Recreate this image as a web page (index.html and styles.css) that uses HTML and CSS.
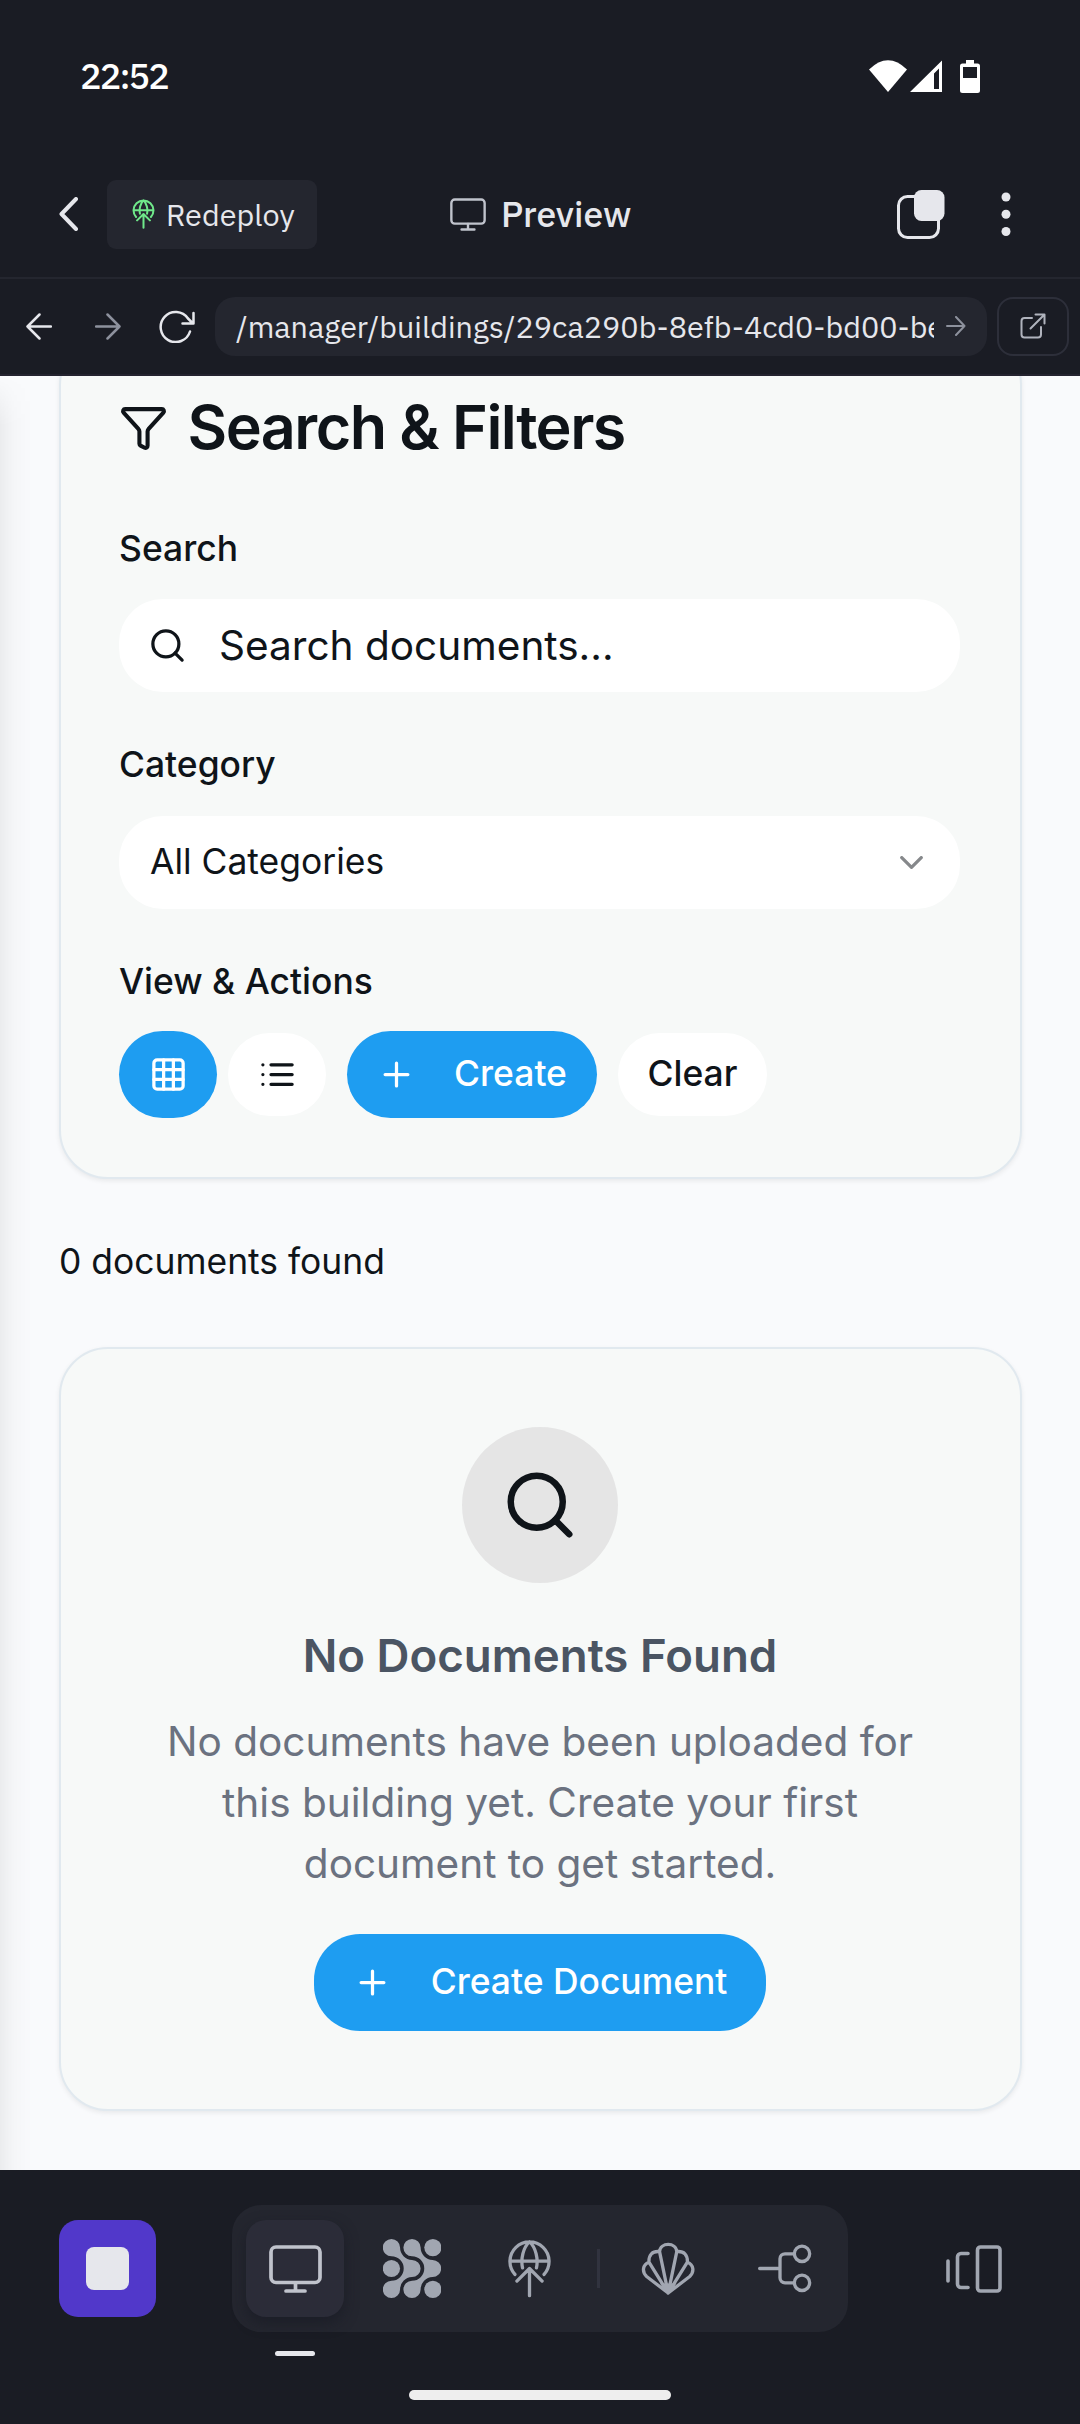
FILE: index.html
```html
<!DOCTYPE html>
<html lang="en">
<head>
<meta charset="utf-8">
<title>Preview</title>
<link rel="stylesheet" href="styles.css">
</head>
<body>
<svg class="defs" width="0" height="0" aria-hidden="true">
  <symbol id="globe" viewBox="405 26 134 178"><path d="M428 133A59 59 0 1 1 516 133M413 93H531M451 113C445 86 453 52 472 34C491 52 499 86 493 113M472 116V197M434 153L472 115L510 153"/></symbol>
  <symbol id="monitor" viewBox="0 0 53 48"><rect x="2" y="2" width="49" height="35.5" rx="5"/><path d="M26.500 38V46M17 46H36"/></symbol>
  <symbol id="search" viewBox="0 0 24 24"><circle cx="11" cy="11" r="8"/><path d="m21 21-4.340-4.340"/></symbol>
  <symbol id="plus" viewBox="0 0 24 24"><path d="M5 12h14M12 5v14"/></symbol>
</svg>

<header class="status">
  <span class="time">22:52</span>
  <svg class="status-icons" width="112" height="34" viewBox="0 0 112 34">
    <path d="M0 9.500Q19 -9 38 9.500L19 32Z"/>
    <path fill-rule="evenodd" d="M41 32L73 .500V32ZM65 13.500V29H70V8.500Z"/>
    <path fill-rule="evenodd" d="M97 0h8v3.500h3.500a2.500 2.500 0 0 1 2.500 2.500v24.500a2.500 2.500 0 0 1-2.500 2.500h-15a2.500 2.500 0 0 1-2.500-2.500V6a2.500 2.500 0 0 1 2.500-2.500H97ZM94 7v11h14V7Z"/>
  </svg>
</header>

<nav class="nav">
  <svg class="back line" width="19" height="34" viewBox="0 0 19 34"><path d="M17 2L2.500 17L17 32"/></svg>
  <div class="redeploy"><svg class="line" width="23" height="30"><use href="#globe"/></svg><span>Redeploy</span></div>
  <div class="title"><svg class="line" width="36" height="33"><use href="#monitor"/></svg><span>Preview</span></div>
  <svg class="copy" width="48" height="49" viewBox="0 0 48 49"><rect class="frame" x="1.500" y="6.500" width="40" height="41" rx="9"/><rect class="solid" x="17" y="0" width="30.500" height="31" rx="7.500"/></svg>
  <svg class="dots" width="10" height="45" viewBox="0 0 10 45"><circle cx="5" cy="5" r="4.500"/><circle cx="5" cy="22.300" r="4.500"/><circle cx="5" cy="39.500" r="4.500"/></svg>
</nav>

<div class="toolbar">
  <svg class="tool line" width="26" height="27" viewBox="0 0 26 27"><path d="M25 13.500H1.500M13.500 1.500L1.500 13.500L13.500 25.500"/></svg>
  <svg class="tool line dim" width="26" height="27" viewBox="0 0 26 27"><path d="M1 13.500H24.500M12.500 1.500L24.500 13.500L12.500 25.500"/></svg>
  <svg class="tool line reload" width="36" height="33" viewBox="0 0 36 33"><path d="M31 21.500A15 15 0 1 1 29 8.500L34 13.500M34.500 3V13.500H23.500"/></svg>
  <div class="url"><span class="url-text">/manager/buildings/29ca290b-8efb-4cd0-bd00-be</span><svg class="line" width="20" height="20" viewBox="0 0 20 20"><path d="M1 10H18.500M10 1L18.500 10L10 19"/></svg></div>
  <div class="external"><svg class="line" width="26" height="26" viewBox="0 0 26 26"><path d="M12 5H4.500a3 3 0 0 0-3 3V21.500a3 3 0 0 0 3 3H18a3 3 0 0 0 3-3V14M10.500 15.500L24.500 1.500M15.500 1.500H24.500V10.500"/></svg></div>
</div>

<main class="page">
  <section class="card filters">
    <h1><svg class="line" width="49" height="49" viewBox="0 0 24 24"><path d="M10 20a1 1 0 0 0 .553.895l2 1A1 1 0 0 0 14 21v-7a2 2 0 0 1 .517-1.341L21.740 4.670A1 1 0 0 0 21 3H3a1 1 0 0 0-.742 1.670l7.225 7.989A2 2 0 0 1 10 14z"/></svg><span>Search &amp; Filters</span></h1>
    <div class="label first">Search</div>
    <div class="field search"><svg class="line" width="39" height="39"><use href="#search"/></svg><span>Search documents...</span></div>
    <div class="label">Category</div>
    <div class="field select"><span>All Categories</span><svg class="line" width="39" height="39" viewBox="0 0 24 24"><path d="m6 9 6 6 6-6"/></svg></div>
    <div class="label">View &amp; Actions</div>
    <div class="actions">
      <div class="btn icon primary"><svg class="line" width="39" height="39" viewBox="0 0 24 24"><rect x="3" y="3" width="18" height="18" rx="2"/><path d="M3 9h18M3 15h18M9 3v18M15 3v18"/></svg></div>
      <div class="btn icon plain"><svg class="line" width="39" height="39" viewBox="0 0 24 24"><path d="M3 6h.01M3 12h.01M3 18h.01M8 6h13M8 12h13M8 18h13"/></svg></div>
      <div class="btn create primary"><svg class="line" width="39" height="39"><use href="#plus"/></svg><span>Create</span></div>
      <div class="btn clear plain"><span>Clear</span></div>
    </div>
  </section>

  <p class="count">0 documents found</p>

  <section class="card empty">
    <div class="badge"><svg class="line" width="78" height="78"><use href="#search"/></svg></div>
    <h2>No Documents Found</h2>
    <p class="hint">No documents have been uploaded for<br>this building yet. Create your first<br>document to get started.</p>
    <div class="btn create-doc primary"><svg class="line" width="39" height="39"><use href="#plus"/></svg><span>Create Document</span></div>
  </section>
</main>

<footer class="dock">
  <div class="dock-row">
    <div class="stop"><i></i></div>
    <div class="tabs">
      <div class="tab active"><svg class="line" width="53" height="48"><use href="#monitor"/></svg></div>
      <div class="tab"><svg class="blobs" width="58" height="59" viewBox="33 26 174 178"><path id="wave" d="M58 26A26 26 0 0 1 84 52A37 37 0 0 0 120 89A26 26 0 0 1 120 141A37 37 0 0 0 84 178A26 26 0 1 1 58 152A37 37 0 0 0 58 78A26 26 0 0 1 58 26Z"/><use href="#wave" x="62"/><circle cx="58" cy="115" r="26"/><circle cx="183" cy="52" r="26"/><circle cx="183" cy="178" r="26"/></svg></div>
      <div class="tab"><svg class="line" width="45" height="59"><use href="#globe"/></svg></div>
      <div class="divider"></div>
      <div class="tab"><svg class="line shell" width="54" height="54" viewBox="33 33 163 163"><path d="M115 187L50 137C35 123 38 101 57 94C56 71 67 60 89 62C91 33 139 33 141 62C163 60 174 71 173 94C192 101 195 123 180 137ZM57 94L115 187L89 62M141 62L115 187L173 94"/><path class="fan" d="M90 158L115 187L140 158Z"/></svg></div>
      <div class="tab"><svg class="line shell" width="54" height="49" viewBox="386 42 162 146"><path d="M391 115H452M494 71H467a15 15 0 0 0-15 15V143a15 15 0 0 0 15 15H494"/><circle cx="518" cy="71" r="23"/><circle cx="518" cy="158" r="23"/></svg></div>
    </div>
    <svg class="line panes" width="56" height="48" viewBox="0 0 56 48"><path d="M2 16V36M22 8.500H15a3.500 3.500 0 0 0-3.500 3.500V39a3.500 3.500 0 0 0 3.500 3.500H22"/><rect x="31.500" y="2" width="22.500" height="44" rx="3"/></svg>
  </div>
  <div class="indicator"></div>
  <div class="home"></div>
</footer>
</body>
</html>
```

FILE: styles.css
```css
* { box-sizing: border-box; margin: 0; padding: 0; }

body {
  width: 1080px;
  height: 2424px;
  display: flex;
  flex-direction: column;
  overflow: hidden;
  background: #1a1c24;
  color: #0f1419;
  font-family: Inter, "Liberation Sans", sans-serif;
}

svg { display: block; flex: none; }
.defs { position: absolute; }
.line { fill: none; stroke: currentColor; stroke-width: 2; stroke-linecap: round; stroke-linejoin: round; }

/* Status bar */
.status, .nav, .toolbar { font-family: "IBM Plex Sans", Roboto, "Liberation Sans", sans-serif; color: #e6e7ec; flex: none; }
.status { height: 150px; padding: 0 99px 0 80px; display: flex; justify-content: space-between; align-items: flex-start; }
.time { margin-top: 53px; font-size: 36px; line-height: 46px; font-weight: 500; color: #fff; letter-spacing: -1.9px; }
.status-icons { margin-top: 60px; fill: #fff; }

/* Header */
.nav { height: 129px; padding: 1px 69px 0 59px; border-bottom: 2px solid #24262f; display: flex; align-items: center; }
.back { stroke-width: 4; }
.redeploy { width: 210px; height: 69px; margin-left: 29px; padding-left: 25px; border-radius: 9px; background: #24262f; display: flex; align-items: center; gap: 11px; font-size: 30.600px; }
.redeploy svg { color: #6fe88a; stroke-width: 12; }
.title { margin-left: 133px; flex: 1; display: flex; align-items: center; gap: 15px; font-size: 35.600px; font-weight: 500; }
.title svg { color: #c0c3cc; stroke-width: 3.500; }
.copy { margin-right: 56px; }
.copy .frame { fill: none; stroke: #e6e7ec; stroke-width: 3; }
.copy .solid { fill: #e6e7ec; }
.dots { fill: #e6e7ec; }

/* Address bar */
.toolbar { height: 97px; padding: 0 11px 1px 26px; border-bottom: 2px solid #24232f; display: flex; align-items: center; }
.tool + .tool { margin-left: 43px; }
.tool { stroke-width: 2.500; }
.tool + .reload { margin-left: 38px; }
.dim { color: #8d919d; }
.url { width: 773px; height: 59px; margin-left: 20px; padding: 0 21px; border-radius: 20px; background: #24262f; display: flex; align-items: center; justify-content: space-between; font-size: 30.500px; }
.url-text { width: 698px; overflow: hidden; white-space: nowrap; }
.url svg { color: #8d919d; }
.external { width: 72px; height: 59px; margin-left: 10px; border: 2px solid #2d2f3a; border-radius: 16px; display: flex; align-items: center; justify-content: center; color: #b0b3bd; }

/* Previewed page */
.page { position: relative; height: 1794px; flex: none; overflow: hidden; padding: 0 58px 0 59px; background: #f9fafc; }
.page::before { content: ""; position: absolute; left: 0; top: 0; width: 32px; height: 100%; background: linear-gradient(90deg, rgba(0,0,0,.055), rgba(0,0,0,.015) 45%, transparent); mask-image: linear-gradient(transparent, #000 50px); }
.card { width: 963px; border: 2px solid #e1e9ef; border-radius: 49px; background: #f7f9f8; box-shadow: 0 2px 5px rgba(0,0,0,.07); }
.filters { height: 843px; margin-top: -40px; padding: 59px 60px 59px 58px; }
h1 { height: 61px; display: flex; align-items: center; gap: 19.500px; font-size: 61px; line-height: 61px; font-weight: 600; letter-spacing: -1.525px; }
.label { margin-top: 48px; font-size: 35.450px; line-height: 50px; font-weight: 500; }
.label.first { margin-top: 66px; margin-bottom: -1px; }
.field { height: 93px; margin-top: 26px; border-radius: 44px; background: #fff; display: flex; align-items: center; }
.search { padding-left: 29px; gap: 32px; font-size: 40.550px; }
.select { padding: 0 29px 0 31px; justify-content: space-between; font-size: 35.450px; }
.select span { padding-bottom: 2px; }
.select svg { opacity: .5; }
.actions { height: 87px; margin-top: 24px; display: flex; align-items: center; }
.btn { height: 87px; border-radius: 44px; display: flex; align-items: center; justify-content: center; font-size: 35.450px; font-weight: 500; }
.btn span { padding-bottom: 2px; }
.icon { width: 98px; }
.primary { background: #1e9df1; color: #fff; }
.plain { height: 83px; background: #fff; }
.icon.plain { margin-left: 11px; }
.create { width: 250px; margin-left: 21px; gap: 38px; }
.clear { width: 149px; margin-left: 21px; }
.count { margin-top: 58px; font-size: 35.450px; line-height: 50px; }

.empty { height: 764px; margin-top: 60px; padding: 78px 1px 0 0; display: flex; flex-direction: column; align-items: center; }
.badge { width: 156px; height: 156px; border-radius: 50%; background: #e5e5e5; display: flex; align-items: center; justify-content: center; }
h2 { margin-top: 38px; font-size: 45.600px; line-height: 70px; font-weight: 600; color: #4b5563; }
.hint { margin-top: 20px; font-size: 40.550px; line-height: 61px; color: #6b7280; text-align: center; white-space: nowrap; }
.create-doc { width: 452px; height: 97px; margin-top: 40px; border-radius: 46px; gap: 39px; }

/* Dock */
.dock { height: 254px; padding: 35px 78px 0 59px; color: #a1a6b1; }
.dock-row { height: 127px; display: flex; align-items: center; }
.stop { width: 97px; height: 97px; border-radius: 19px; background: #5138ca; display: flex; align-items: center; justify-content: center; }
.stop i { width: 43px; height: 43px; border-radius: 8px; background: #e6e7ec; }
.tabs { width: 616px; height: 127px; margin-left: 76px; padding-left: 14px; border-radius: 29px; background: #24262f; display: flex; align-items: center; }
.tab { flex: none; width: 98px; height: 97px; margin-right: 19px; border-radius: 20px; display: flex; align-items: center; justify-content: center; }
.tab:last-child { margin-right: 0; }
.tab.active { background: #2b2c38; color: #c0c3cc; box-shadow: 0 6px 14px rgba(20,21,32,.5); }
.tab svg { stroke-width: 10; }
.tab.active svg { stroke-width: 3.700; }
.tab .blobs { fill: currentColor; stroke: none; }
.tab .fan { fill: currentColor; stroke: none; }
.divider { flex: none; width: 3px; height: 39px; margin-right: 19px; background: #31333f; }
.panes { margin-left: 98px; stroke-width: 3.600; }
.indicator { width: 40px; height: 5px; margin: 19px 0 0 216px; border-radius: 3px; background: #e6e7ec; }
.home { width: 262px; height: 10px; margin: 34px 0 0 350px; border-radius: 5px; background: #eee; }
```
